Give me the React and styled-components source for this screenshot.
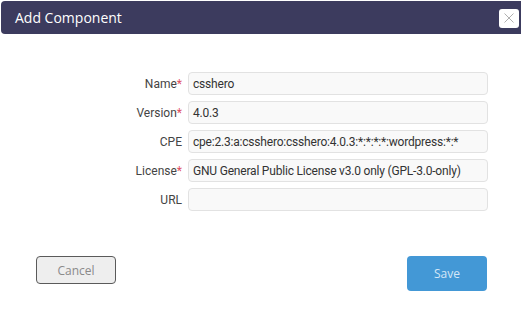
import React from "react";
import styled, { createGlobalStyle } from "styled-components";

const Global = createGlobalStyle`
  html, body { margin: 0; padding: 0; background: #fff; }
  body { font-family: "Open Sans", sans-serif; }
`;

const Dialog = styled.div`
  width: 522px;
  height: 313px;
  box-sizing: border-box;
  padding: 1px 1px 0 1px;
  display: flex;
  flex-direction: column;
`;

const Header = styled.div`
  height: 33px;
  background: #3c3b5e;
  border-radius: 4px 0 0 4px;
  display: flex;
  align-items: center;
  justify-content: space-between;
  padding: 0 2px 0 14px;
`;

const Title = styled.div`
  font-family: "Open Sans", sans-serif;
  font-size: 14px;
  color: #ffffff;
  margin-top: -1px;
`;

const Close = styled.div`
  width: 20px;
  height: 19px;
  background: #fff;
  border-radius: 3px;
  display: flex;
  align-items: center;
  justify-content: center;
  margin-top: 1px;
`;

const Form = styled.div`
  display: grid;
  grid-template-columns: 181px 300px;
  column-gap: 6px;
  row-gap: 6px;
  margin-top: 38px;
`;

const Label = styled.div`
  font-family: Roboto, sans-serif;
  font-size: 12px;
  color: #444;
  text-align: right;
  align-self: center;
`;

const Star = styled.span`
  color: #e05060;
`;

const Input = styled.div`
  height: 23px;
  box-sizing: border-box;
  border: 1px solid #e2e2e2;
  border-radius: 4px;
  background: #f9f9f9;
  font-family: Roboto, sans-serif;
  font-size: 12px;
  letter-spacing: -0.2px;
  color: #333;
  padding: 0 4px;
  display: flex;
  align-items: center;
  white-space: nowrap;
  overflow: hidden;
`;

const Actions = styled.div`
  display: flex;
  justify-content: space-between;
  align-items: flex-start;
  padding: 0 34px 0 35px;
  margin-top: 45px;
`;

const Button = styled.div`
  width: 80px;
  height: ${(p) => (p.$primary ? "35px" : "28px")};
  box-sizing: border-box;
  border-radius: 4px;
  font-family: "Open Sans", sans-serif;
  font-size: 12px;
  display: flex;
  align-items: center;
  justify-content: center;
  background: ${(p) => (p.$primary ? "#4398d6" : "#eeeeee")};
  color: ${(p) => (p.$primary ? "#d4e6f6" : "#8a8a8a")};
  border: ${(p) => (p.$primary ? "none" : "1px solid #5a5a5a")};
`;

const fields = [
  { label: "Name", req: true, value: "csshero" },
  { label: "Version", req: true, value: "4.0.3" },
  { label: "CPE", req: false, value: "cpe:2.3:a:csshero:csshero:4.0.3:*:*:*:*:wordpress:*:*" },
  { label: "License", req: true, value: "GNU General Public License v3.0 only (GPL-3.0-only)" },
  { label: "URL", req: false, value: "" },
];

export default function App() {
  return (
    <>
      <Global />
      <Dialog>
        <Header>
          <Title>Add Component</Title>
          <Close>
            <svg width="12" height="12" viewBox="0 0 12 12">
              <path d="M1.5 1.5L10.5 10.5M10.5 1.5L1.5 10.5" stroke="#b0b0b0" strokeWidth="1" />
            </svg>
          </Close>
        </Header>
        <Form>
          {fields.map((f) => (
            <React.Fragment key={f.label}>
              <Label>
                {f.label}
                {f.req && <Star>*</Star>}
              </Label>
              <Input>{f.value}</Input>
            </React.Fragment>
          ))}
        </Form>
        <Actions>
          <Button>Cancel</Button>
          <Button $primary>Save</Button>
        </Actions>
      </Dialog>
    </>
  );
}
